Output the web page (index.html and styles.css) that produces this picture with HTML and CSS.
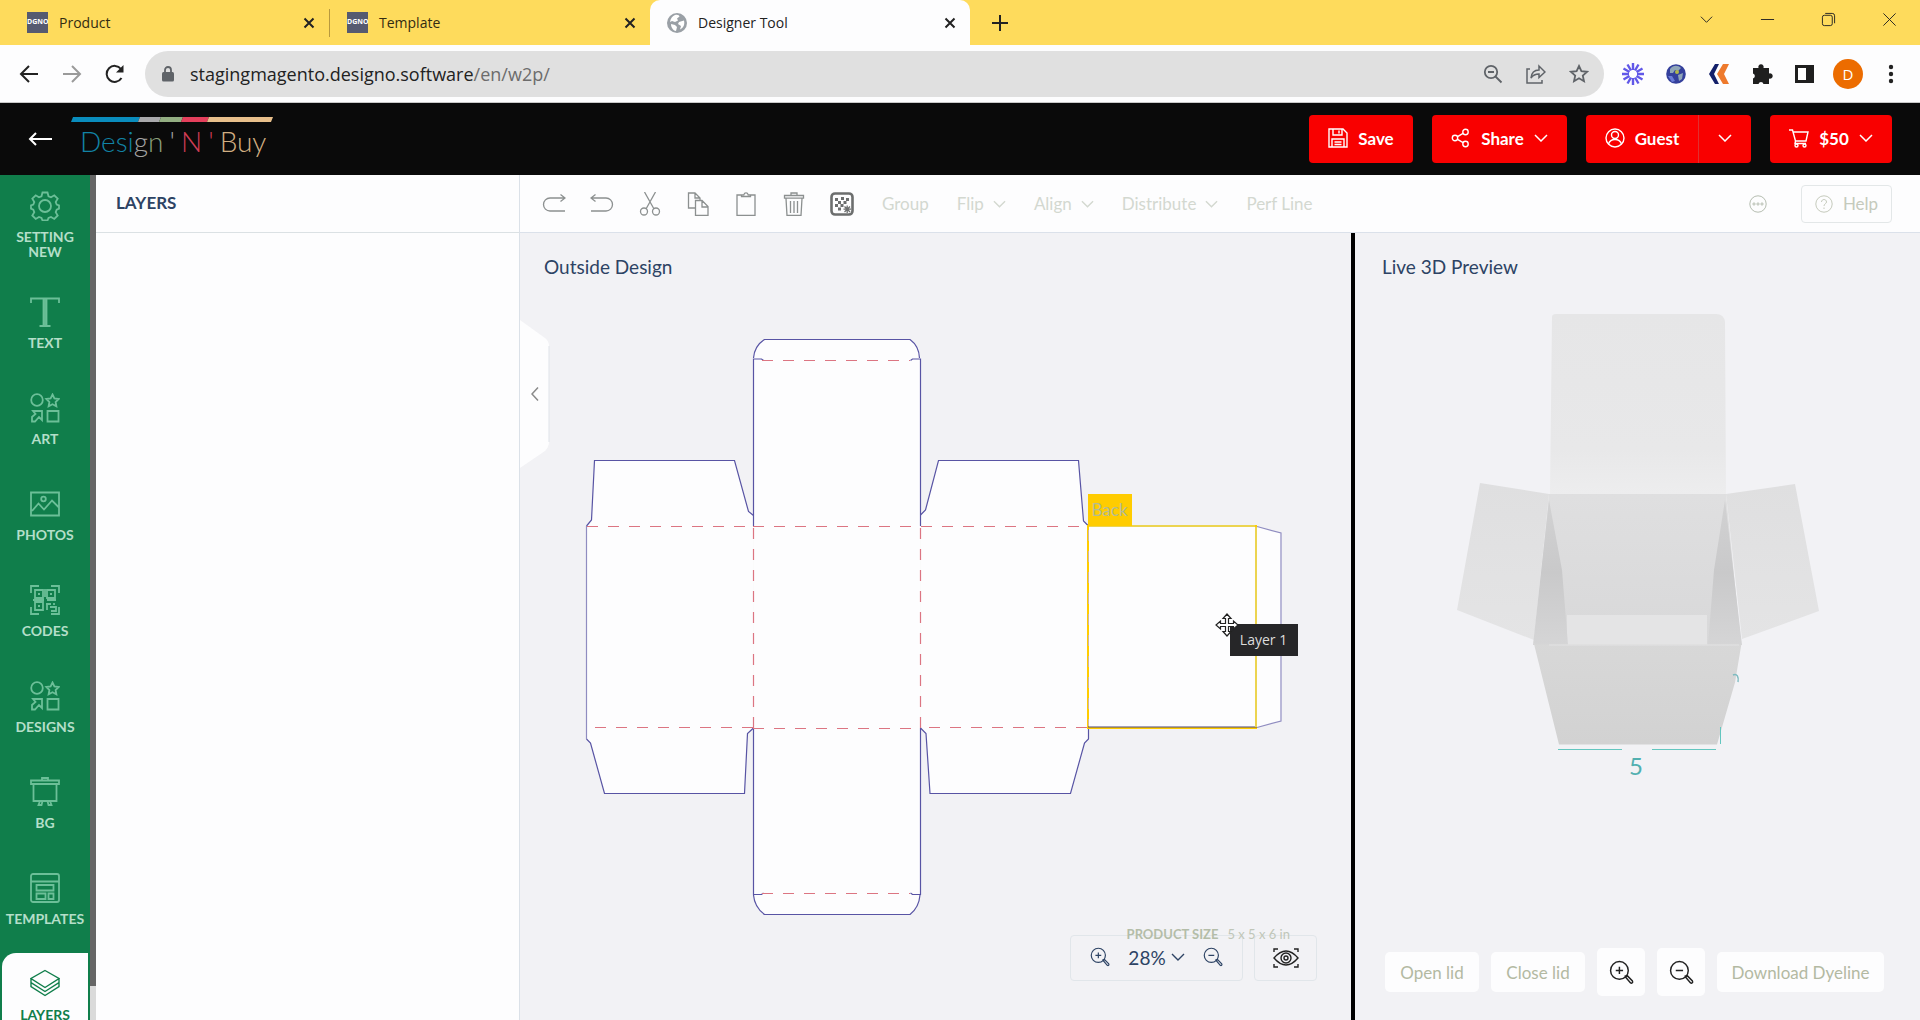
FILE: index.html
```html
<!DOCTYPE html>
<html lang="en">
<head>
<meta charset="utf-8">
<title>Designer Tool</title>
<link rel="stylesheet" href="styles.css">
</head>
<body>
<svg class="sprite" aria-hidden="true">
  <symbol id="x" viewBox="0 0 12 12"><path d="M1.500 1.500l9 9M10.500 1.500l-9 9"/></symbol>
  <symbol id="chev" viewBox="0 0 14 8"><path d="M1 1l6 6 6-6"/></symbol>
  <symbol id="art" viewBox="0 0 30 30"><circle cx="7" cy="7" r="5.800"/><path d="M22.500 1.500l1.900 3.900 4.300.6-3.100 3 .8 4.300-3.900-2-3.900 2 .8-4.300-3.100-3 4.300-.6z"/><path d="M3 18h9v9l-3-3-4 4.500H2V24l3.500-3zM17.500 18h11v10.500h-11z"/></symbol>
  <symbol id="zin" viewBox="0 0 24 24"><circle cx="10" cy="10" r="8.500"/><path d="M6.500 10h7M10 6.500v7M16 16.500l1.500-1.500 5 5.200c.8 1.400-.6 2.600-1.800 1.800zM15 15l1.800 1.200"/></symbol>
  <symbol id="zout" viewBox="0 0 24 24"><circle cx="10" cy="10" r="8.500"/><path d="M6.500 10h7M16 16.500l1.500-1.500 5 5.200c.8 1.400-.6 2.600-1.800 1.800zM15 15l1.800 1.200"/></symbol>
</svg>

<header class="browser">
  <div class="tabs">
    <div class="tab tab--sep"><span class="fav">DGNO</span><span class="tab__name">Product</span><button class="tab__close" aria-label="Close Product"><svg><use href="#x"/></svg></button></div>
    <div class="tab"><span class="fav">DGNO</span><span class="tab__name">Template</span><button class="tab__close" aria-label="Close Template"><svg><use href="#x"/></svg></button></div>
    <div class="tab tab--active">
      <svg class="globe" viewBox="0 0 20 20"><circle cx="10" cy="10" r="10" fill="#9aa0a6"/><path d="M8 2c3-.6 4 .2 4.500 1.500L10 5.500l1 2-3 1.500-3-1-2 1C3.500 5.500 5.500 3 8 2zM4 11l4 1 2 2-1 4c-3-.6-5-3.500-5-7zM12 9l5-1.500c1 4-.5 7.500-4 9l1-3.500-3-2z" fill="#fff"/></svg>
      <span class="tab__name">Designer Tool</span><button class="tab__close" aria-label="Close Designer Tool"><svg><use href="#x"/></svg></button></div>
    <button class="newtab" aria-label="New tab"><svg viewBox="0 0 16 16"><path d="M8 0v16M0 8h16"/></svg></button>
    <div class="winctl">
      <button aria-label="Search tabs"><svg viewBox="0 0 16 16"><path d="M2 5l6 6 6-6"/></svg></button>
      <button aria-label="Minimize"><svg viewBox="0 0 16 16"><path d="M1 8h14"/></svg></button>
      <button aria-label="Restore"><svg viewBox="0 0 16 16"><rect x="1.500" y="3.500" width="10.500" height="11" rx="2"/><path d="M4.500 1.500H12q2.500 0 2.500 2.500v8"/></svg></button>
      <button aria-label="Close window"><svg viewBox="0 0 16 16"><path d="M1.500 1.500l13 13M14.500 1.500l-13 13"/></svg></button>
    </div>
  </div>
  <div class="nav">
    <div class="nav__btns">
      <button aria-label="Back"><svg viewBox="0 0 20 20"><path d="M19 10H2M10 2l-8 8 8 8"/></svg></button>
      <button aria-label="Forward" class="dim"><svg viewBox="0 0 20 20"><path d="M1 10h17M10 2l8 8-8 8"/></svg></button>
      <button aria-label="Reload"><svg viewBox="0 0 20 20"><path d="M16.500 14A8 8 0 1 1 16 5"/><path d="M18.500 1v7.500H11z" fill="#222" stroke="none"/></svg></button>
    </div>
    <div class="omni">
      <svg class="lock" viewBox="0 0 12 16"><rect y="6" width="12" height="9.500" rx="1.500" fill="#5f6368"/><path d="M3 6V4a3 3 0 0 1 6 0v2" fill="none" stroke="#5f6368" stroke-width="1.800"/></svg>
      <a class="url" href="#">stagingmagento.designo.software<span>/en/w2p/</span></a>
      <button aria-label="Zoom"><svg viewBox="0 0 20 20"><circle cx="8" cy="8" r="6.200"/><path d="M5 8h6M12.500 12.500l6 6"/></svg></button>
      <button aria-label="Share page"><svg viewBox="0 0 20 20"><path d="M4 5H1v14h15v-3M5 14c.5-5 3-8 8-8V2l6 6-6 5.500V10c-3.500 0-6 1-8 4z" stroke-width="1.500"/></svg></button>
      <button aria-label="Bookmark"><svg viewBox="0 0 20 20"><path d="M10 2l2.400 5.200 5.600.6-4.200 3.800 1.200 5.600-5-2.900-5 2.900 1.200-5.600L2 7.800l5.600-.6z"/></svg></button>
    </div>
    <div class="exts">
      <button aria-label="Burst extension"><svg viewBox="-11 -11 22 22"><g stroke="#6158e8" stroke-width="2.400"><path d="M0-4v-7M0 4v7M4 0h7M-4 0h-7M2-3.500l3.500-6M-2-3.500l-3.500-6M2 3.500l3.500 6M-2 3.500l-3.500 6M3.500-2l6-3.500M3.500 2l6 3.500M-3.500-2l-6-3.500M-3.500 2l-6 3.500"/></g></svg></button>
      <button aria-label="Globe extension"><svg viewBox="-11 -11 22 22"><circle r="9.800" fill="#34409c"/><path d="M-6-5c3-4 8-4 11-1l-3 3-3-1-2 3-3 0zM2 1l5-2-1 6-3 2z" fill="#8fa6b8"/><path d="M-8 2l4 0 3 5-3 1z" fill="#6a7cd8"/><circle cx="1" cy="-2" r="2" fill="#b2b84a"/></svg></button>
      <button aria-label="Chevron extension"><svg viewBox="0 0 22 22"><path d="M7 1h4L6 11l5 10H7L1 11z" fill="#14206a"/><path d="M15 1h6l-5 10 5 10h-6L9 11z" fill="#ee7a2d"/></svg></button>
      <button aria-label="Extensions"><svg viewBox="0 0 22 22"><path d="M2 5h5.500a2.700 2.700 0 1 1 5 0H18v5.500a2.700 2.700 0 1 1 0 5V21h-5.500a2.600 2.600 0 0 0-5 0H2v-5.500a2.600 2.600 0 0 0 0-5z" fill="#1f1f1f"/></svg></button>
      <button aria-label="Side panel"><svg viewBox="0 0 22 22"><path d="M2.500 3.500h16v15h-16z" fill="#fff" stroke="#1f1f1f" stroke-width="3"/><path d="M12 3h7v16h-7z" fill="#1f1f1f"/></svg></button>
      <button class="avatar">D</button>
      <button aria-label="Menu"><svg viewBox="0 0 22 22"><circle cx="11" cy="4" r="2.200"/><circle cx="11" cy="11" r="2.200"/><circle cx="11" cy="18" r="2.200"/></svg></button>
    </div>
  </div>
</header>

<div class="appbar">
  <button class="appbar__back" aria-label="Back"><svg viewBox="0 0 24 14"><path d="M24 7H2M8 1L2 7l6 6"/></svg></button>
  <a class="logo" href="#">
    <svg class="logo__bar" viewBox="0 0 202 5"><path d="M2 0h67l-2 5H0z" fill="#0a8dbd"/><path d="M69 0h21l-2 5H67z" fill="#a9a9ab"/><path d="M90 0h22l-2 5H88z" fill="#93ae82"/><path d="M112 0h26l-2 5h-26z" fill="#e5405c"/><path d="M138 0h64l-2 5h-64z" fill="#e8bf8b"/></svg>
    <span class="logo__text"><span><span class="c1">Desi</span><span class="c2">g</span><span class="c3">n</span></span> <span class="c2">'</span> <span class="c4">N</span> <span class="c4">'</span> <span class="c5">Buy</span></span>
  </a>
  <div class="actions">
    <button class="red save"><svg viewBox="0 0 20 20"><path d="M1 1h14l4 4v14H1zM5 1v6h9V1M11 2.500v3M4 19v-8h12v8M6.500 14h7M6.500 16.500h7"/></svg>Save</button>
    <button class="red share"><svg viewBox="0 0 20 20"><circle cx="4" cy="10" r="2.700"/><circle cx="14.500" cy="4" r="2.700"/><circle cx="14.500" cy="16" r="2.700"/><path d="M6.500 8.700l5.600-3.300M6.500 11.300l5.600 3.300"/></svg>Share<svg class="chev"><use href="#chev"/></svg></button>
    <div class="split">
      <button class="red guest"><svg viewBox="0 0 20 20"><circle cx="10" cy="10" r="9"/><circle cx="10" cy="7" r="3.500"/><path d="M3.500 16c1-3 3-4.500 6.500-4.500s5.500 1.500 6.500 4.500"/></svg>Guest</button>
      <button class="red more" aria-label="Guest menu"><svg class="chev"><use href="#chev"/></svg></button>
    </div>
    <button class="red cart"><svg viewBox="0 0 20 20"><path d="M0 2h3.500l3 11h10.500l2-9H4M6.500 13l-.5 2.500h11"/><circle cx="7.500" cy="17.500" r="1.500"/><circle cx="15.500" cy="17.500" r="1.500"/></svg>$50<svg class="chev"><use href="#chev"/></svg></button>
  </div>
</div>

<div class="work">
  <nav class="side">
    <a class="item item--two" href="#"><svg viewBox="0 0 30 30"><circle cx="15" cy="15" r="6"/><path d="M12.500 1.500h5l1 3.800 2.500 1 3.300-2 3.400 3.400-2 3.300 1 2.500 2.300.8v3.400l-2.300 1-1 2.500 2 3.300-3.400 3.400-3.300-2-2.500 1-1 2.600h-5l-1-2.600-2.500-1-3.300 2-3.400-3.400 2-3.300-1-2.500-2.300-1v-3.400l2.300-.8 1-2.500-2-3.300 3.400-3.400 3.300 2 2.500-1z"/></svg><span>SETTING NEW</span></a>
    <a class="item" href="#"><svg viewBox="0 0 30 30"><path d="M1 6V1.500h28V6M13.500 2v26.500M16.500 2v26.500M9.500 29h11"/><path d="M15 2v27" /></svg><span>TEXT</span></a>
    <a class="item" href="#"><svg><use href="#art"/></svg><span>ART</span></a>
    <a class="item" href="#"><svg viewBox="0 0 30 30"><path d="M1 3.500h28v23H1zM2 22l6.500-7.500 5.500 6 8-9 7 7"/><circle cx="13.500" cy="10" r="2.300"/></svg><span>PHOTOS</span></a>
    <a class="item" href="#"><svg viewBox="0 0 30 30"><path d="M1 8V1h8M21 1h8v7M1 22v7h8M21 29h8v-7M5 5h8v8H5zM17 5h8v8h-8zM5 17h8v8H5zM8 9h2M20 9h2M8 21h2M15 4v8M3 15h11M17 15h9M16 19h5M17 19v6M20 22h6v4h-5M24 18v2"/></svg><span>CODES</span></a>
    <a class="item" href="#"><svg><use href="#art"/></svg><span>DESIGNS</span></a>
    <a class="item" href="#"><svg viewBox="0 0 30 30"><path d="M1 3.500h28v3.500H1zM3.500 7v17h23V7M12 3V1h6v2M10 24l-1.500 4h3l1-4M20 24l1.500 4h-3l-1-4"/></svg><span>BG</span></a>
    <a class="item" href="#"><svg viewBox="0 0 30 30"><rect x="1" y="1" width="28" height="28" rx="2"/><path d="M1 8.500h28M6.500 12h17v5.500h-17zM6.500 20.500h9V26h-9zM18.500 20.500h5V26h-5z"/></svg><span>TEMPLATES</span></a>
    <a class="item item--active" href="#"><svg viewBox="0 0 30 30"><path d="M15 1.500l14 8-14 9-14-9zM1 9.500v4l14 9 14-9v-4M1 14v3.500l14 9 14-9V14"/></svg><span>LAYERS</span></a>
  </nav>
  <div class="scroll"><div class="scroll__thumb"></div></div>
  <aside class="panel"><h2 class="panel__head">LAYERS</h2></aside>

  <main class="main">
    <div class="toolbar">
      <div class="tools">
        <button aria-label="Redo"><svg viewBox="0 0 24 24"><path d="M23 19H8a6.500 6.500 0 0 1 0-13h15M18.500 2.500L23 6l-4.500 3.500"/></svg></button>
        <button aria-label="Undo"><svg viewBox="0 0 24 24"><path d="M1 19h15a6.500 6.500 0 0 0 0-13H1M5.500 2.500L1 6l4.500 3.500"/></svg></button>
        <button aria-label="Cut"><svg viewBox="0 0 24 24"><path d="M6.500 0l9.500 17M17.500 0L8 17"/><circle cx="6" cy="19.500" r="3.500"/><circle cx="18" cy="19.500" r="3.500"/></svg></button>
        <button aria-label="Copy"><svg viewBox="0 0 24 24"><path d="M9 16H2.500V1H9l5 5v2M9 1v5h5M9.500 8.500H16l6 6v9H9.500zM16 8.500V15h6"/></svg></button>
        <button aria-label="Paste"><svg viewBox="0 0 24 24"><path d="M8 3H3v20.500h18V3h-5M7.500 4.500V2.800h2.300c.7-2.600 3.700-2.600 4.400 0h2.300v1.700z"/></svg></button>
        <button aria-label="Delete"><svg viewBox="0 0 24 24"><path d="M2.500 3.500h19v2.700h-19zM9 3V1h6v2M4 6.500l1 17h14l1-17M8.500 9v12M12 9v12M15.500 9v12"/></svg></button>
        <button aria-label="Transparency"><svg viewBox="0 0 24 24"><rect x="1.500" y="1.500" width="21" height="21" rx="3.500" stroke="#6c6e6e" stroke-width="2.600"/><path d="M5 6h3v3H5zM11 5h3v3h-3zM16 6h3v3h-3zM8 9h3v3H8zM13.500 9h3v3h-3zM5 12h3v3H5zM10.500 12h3v3h-3zM8 15.500h3v3H8z" fill="#6c6e6e" stroke="none"/><path d="M14.500 14.500l5.500 5.500M20 14.500L14.500 20M17.200 13.500v7.500M13.500 17.200H21" stroke="#6c6e6e"/></svg></button>
      </div>
      <div class="cmds">
        <button>Group</button>
        <button>Flip<svg class="chev"><use href="#chev"/></svg></button>
        <button>Align<svg class="chev"><use href="#chev"/></svg></button>
        <button>Distribute<svg class="chev"><use href="#chev"/></svg></button>
        <button>Perf Line</button>
      </div>
      <button class="dots" aria-label="More"><svg viewBox="0 0 18 18"><circle cx="9" cy="9" r="8.200"/><circle cx="5" cy="9" r="1.100"/><circle cx="9" cy="9" r="1.100"/><circle cx="13" cy="9" r="1.100"/></svg></button>
      <button class="help"><svg viewBox="0 0 18 18"><circle cx="9" cy="9" r="8.200"/><path d="M6.500 7c0-3.300 5-3.300 5 0 0 1.700-2.500 1.800-2.500 4M9 12.500v1.500"/></svg>Help</button>
    </div>

    <div class="views">
      <section class="canvas">
        <button class="fold" aria-label="Collapse panel"><svg class="fold__bg" viewBox="0 0 30 148"><path d="M0 0l25 18q4 3 4 8v96q0 5-4 9L0 148z" fill="#fdfdfe"/><path d="M29 26v96" stroke="#dfe3ea"/></svg><svg class="fold__ic" viewBox="0 0 8 14"><path d="M7 0.500L1 7l6 6.500"/></svg></button>
        <h3 class="title">Outside Design</h3>
        <div class="stage">
          <svg viewBox="585 335 701 583">
            <g fill="#fdfdfe" stroke="#5854a4" stroke-width="1.200">
              <path d="M586.500 526l5-6 3-59.500h140l14 51 5 4V728l-6 5.500-3 60h-140l-14-50.500-4-4z" stroke="none"/>
              <path d="M753.500 526V359.500q0-14 12-20h145q10 6 10 20V894q-1 14-11 20.500H765q-11-6-11.500-20.500z" stroke="none"/>
              <path d="M920.500 526v-11l5-5 13-49.500h140l5 60.500 5 5 .5 213-4.500 4-14 50.500H930l-4-60-5.500-6z" stroke="none"/>
              <path d="M1088 526.500h169l24.500 6.500v188l-24.500 6.500h-169z" stroke="none"/>
              <path fill="none" d="M586.500 526l5-6 3-59.500h140l14 51 5 4M586.500 739l4 4 14 50.500h140l3-60 6-5.500M920.500 515l5-5 13-49.500h140l5 60.500 5 5M920.500 728l5.500 5.500 4 60h140.500l14-50.500 4-4v-12"/>
              <path fill="none" d="M753.500 526V359h8l2 1.500M753.500 358q1-12 11-18.500h145.500q9 6.500 9.500 18.500M920.500 526V359h-8l-2 1.500M753.500 728V894.500h8l2-1.500M753.500 895q1 12 11 19.500H910q9-7 10-19.500M920.500 728V894.500h-8l-2-1.500"/>
              <path fill="none" stroke="#8f8cc0" d="M586.500 526v213M1257 526.500l24 6.500v188l-24 6.500"/>
            </g>
            <g fill="none" stroke="#dc7582" stroke-width="1.200" stroke-dasharray="11 10">
              <path d="M587 526.500h166M753 526.500h167M921 526.500h167M595 727.500h158M753 728.500h167M929 727.500h159M762 360.500h148M762 893.500h148"/>
              <path d="M753.500 528v200M920.500 528v200"/>
            </g>
            <path d="M1088 526h168v202h-168z" fill="none" stroke="#fc0" stroke-width="2"/>
            <path d="M1088 727h169" stroke="#4a4478"/>
            <path d="M1256 527v200M1089 526h166" stroke="#ecd450" stroke-width="2"/>
            <path d="M1088.500 530v196" stroke="#d0b6a0" stroke-dasharray="11 10"/>
          </svg>
          <span class="tag">Back</span>
          <span class="tip">Layer 1</span>
          <svg class="cursor" viewBox="-12 -12 24 24"><path d="M0-11l4 4.500H1.500v5H6.500V-4L11 0l-4.500 4V1.500h-5v5H4L0 11l-4-4.500h2.500v-5h-5V4L-11 0l4.500-4v2.500h5v-5H-4z" fill="#fff" stroke="#222" stroke-width="1.200"/></svg>
        </div>
        <div class="zoombar">
          <p class="size"><b>PRODUCT SIZE</b><span>5 x 5 x 6 in</span></p>
          <div class="zoombox">
            <button aria-label="Zoom in"><svg><use href="#zin"/></svg></button>
            <button class="pct">28%<svg class="chev"><use href="#chev"/></svg></button>
            <button aria-label="Zoom out"><svg><use href="#zout"/></svg></button>
          </div>
          <button class="eye" aria-label="Preview"><svg viewBox="0 0 26 20"><path d="M1 10Q13-4 25 10 13 24 1 10zM1 4V1h4M21 1h4v3M1 16v3h4M21 19h4v-3"/><circle cx="13" cy="10" r="5"/><circle cx="13" cy="10" r="2"/></svg></button>
        </div>
      </section>

      <section class="preview">
        <h3 class="title">Live 3D Preview</h3>
        <svg class="box3d" viewBox="1455 311 366 470">
          <defs>
            <linearGradient id="g1" x1="0" y1="0" x2="0" y2="1"><stop offset="0" stop-color="#e6e6e7"/><stop offset=".75" stop-color="#e8e8e9"/><stop offset="1" stop-color="#ededee"/></linearGradient>
            <linearGradient id="g2" x1="0" y1="0" x2="0" y2="1"><stop offset="0" stop-color="#dfdfe0"/><stop offset="1" stop-color="#d8d8d9"/></linearGradient>
            <linearGradient id="g3" x1="0" y1="0" x2="0" y2="1"><stop offset="0" stop-color="#d8d8d8"/><stop offset="1" stop-color="#d2d2d2"/></linearGradient>
            <linearGradient id="g4" x1="0" y1="0" x2="0" y2="1"><stop offset="0" stop-color="#d2d2d3"/><stop offset=".5" stop-color="#c9c9ca"/><stop offset="1" stop-color="#d5d5d6"/></linearGradient>
            <linearGradient id="g5" x1="0" y1="0" x2="0" y2="1"><stop offset="0" stop-color="#dfdfe0"/><stop offset="1" stop-color="#e4e4e5"/></linearGradient>
          </defs>
          <path d="M1552 317q0-3 4-3h160q8 0 9 8l1 172h-176z" fill="url(#g1)"/>
          <path d="M1480 483l69 11-15 146-77-30zM1795 484l-69 10 16 145 77-28z" fill="url(#g5)"/>
          <path d="M1549 494h177l15 151h-207z" fill="url(#g2)"/>
          <path d="M1567 615h140v30h-140z" fill="#e4e4e5"/>
          <path d="M1549 500l13 70 6 75h-35zM1725 500l-11 70-6 75h34z" fill="url(#g4)"/>
          <path d="M1533 640l2 4.500h206l1-4-7 42-18 62h-158z" fill="url(#g3)"/>
          <path d="M1549 645h190" stroke="#e2e2e3"/>
          <path d="M1558 749.500h64M1652 749.500h64M1720.500 744v-17" stroke="#63c6bf" fill="none"/>
          <path d="M1733 675c4-2 6 2 5 7" stroke="#7dbbc0" stroke-width="1.500" fill="none"/>
          <text x="1636" y="775" text-anchor="middle">5</text>
        </svg>
        <div class="pbtns">
          <button>Open lid</button>
          <button>Close lid</button>
          <button class="sq" aria-label="Zoom in preview"><svg><use href="#zin"/></svg></button>
          <button class="sq" aria-label="Zoom out preview"><svg><use href="#zout"/></svg></button>
          <button class="dl">Download Dyeline</button>
        </div>
      </section>
    </div>
  </main>
</div>
</body>
</html>
```
FILE: styles.css
```css
* { box-sizing: border-box; }
body {
  margin: 0;
  height: 100vh;
  overflow: hidden;
  display: flex;
  flex-direction: column;
  background: #fdfdfe;
  color: #2d4364;
  font-family: Lato, "Open Sans", sans-serif;
  font-size: 17px;
}
button {
  border: 0;
  padding: 0;
  margin: 0;
  background: none;
  color: inherit;
  font: inherit;
  display: flex;
  align-items: center;
  justify-content: center;
}
a { color: inherit; text-decoration: none; }
h2, h3, p { margin: 0; font-weight: inherit; }
svg { display: block; flex: none; }
button svg, .item svg { fill: none; stroke: currentColor; }
.sprite { position: absolute; width: 0; height: 0; }
.chev { width: 14px; height: 8px; stroke-width: 1.5; }

/* browser frame */
.browser { flex: none; font-family: "Open Sans", sans-serif; }
.tabs { display: flex; height: 45px; padding-left: 10px; background: #fedb5c; color: #332b12; }
.tab { display: flex; align-items: center; width: 320px; padding: 0 14px 0 17px; position: relative; }
.tab--sep { border-right: 1px solid #c9a53a; border-image: linear-gradient(transparent 22%, #b8993e 22% 80%, transparent 80%) 1; }
.tab--active { background: #fdfdfe; border-radius: 10px 10px 0 0; color: #222; }
.tab__name { flex: 1; margin-left: 11px; font-size: 14px; }
.tab__close svg { width: 12px; height: 12px; stroke: #222; stroke-width: 2; }
.fav { width: 21px; height: 21px; background: #565a70; color: #fff; font-size: 7px; font-weight: 700; line-height: 20px; text-align: center; }
.globe { width: 20px; height: 20px; }
.newtab { margin-left: 22px; }
.newtab svg { width: 16px; height: 16px; stroke: #222; stroke-width: 2; }
.winctl { display: flex; gap: 46px; margin-left: auto; padding: 0 23px 6px 0; }
.winctl svg { width: 15px; height: 15px; stroke: #222; }
.nav { display: flex; align-items: center; height: 58px; padding: 6px 18px 6px 19px; border-bottom: 1px solid #c9c9c9; }
.nav__btns { display: flex; gap: 23px; width: 126px; color: #222; }
.nav__btns svg { width: 20px; height: 20px; stroke-width: 2; }
.nav__btns .dim { color: #9a9a9a; }
.omni { flex: 1; display: flex; align-items: center; gap: 23px; height: 46px; padding: 0 15px 0 17px; border-radius: 23px; background: #e0e0e0; color: #5f6368; }
.omni button svg { width: 20px; height: 20px; stroke-width: 1.8; }
.lock { width: 12px; height: 16px; }
.url { flex: 1; margin-left: -7px; font-size: 18px; color: #222; }
.url span { color: #6c6c6c; }
.exts { display: flex; align-items: center; gap: 21px; margin-left: 18px; }
.exts svg { width: 22px; height: 22px; stroke: none; fill: #222; }
.avatar { width: 30px; height: 30px; margin: 0 -4px; border-radius: 50%; background: #ec6c00; color: #fff; font-size: 15px; }

/* application bar */
.appbar { flex: none; display: flex; align-items: center; height: 72px; padding: 0 28px; background: #0a0a0a; color: #fff; }
.appbar__back svg { width: 24px; height: 14px; stroke-width: 2; }
.logo { margin-left: 19px; height: 44px; }
.logo__bar { width: 202px; height: 5px; }
.logo__text { display: flex; gap: 6px; margin-left: 9px; font-size: 28px; font-weight: 300; line-height: 38px; white-space: nowrap; }
.c1 { color: #1283a5; }
.c2 { color: #a4a4a4; }
.c3 { color: #8ba07c; }
.c4 { color: #cf3c55; }
.c5 { color: #d2af82; }
.actions { display: flex; gap: 19px; margin-left: auto; }
.red { height: 48px; gap: 10px; padding-bottom: 2px; border-radius: 4px; background: #f90000; color: #fff; font-weight: 700; }
.red svg { width: 20px; height: 20px; stroke-width: 1.4; }
.red .chev { width: 14px; height: 8px; stroke-width: 1.5; }
.save { width: 104px; }
.share { width: 135px; }
.split { display: flex; }
.guest { width: 112px; border-radius: 4px 0 0 4px; }
.more { width: 53px; border-left: 1px solid #e03030; border-radius: 0 4px 4px 0; }
.cart { width: 122px; }

/* work area */
.work { flex: 1; min-height: 0; display: flex; }
.side { flex: none; width: 90px; overflow: hidden; background: #107e4b; }
.item { display: flex; flex-direction: column; align-items: center; gap: 8px; min-height: 96px; padding-top: 16px; color: #6cbf98; }
.item--two { min-height: 106px; }
.item svg { width: 30px; height: 30px; stroke-width: 1.8; }
.item span { max-width: 80px; color: #b4dfc9; font-size: 14px; font-weight: 700; line-height: 15px; text-align: center; }
.item--active { margin: 0 2px; border-radius: 14px 0 0; background: #fdfdfe; color: #107e4b; }
.item--active svg { stroke-width: 1.4; }
.item--active span { color: #107e4b; }
.scroll { flex: none; width: 6px; background: #dadada; }
.scroll__thumb { height: 96%; background: #666; }
.panel { flex: none; width: 424px; border-right: 1px solid #dbe1e8; }
.panel__head { height: 58px; padding-left: 20px; border-bottom: 1px solid #dbe1e4; font-size: 17px; font-weight: 700; line-height: 56px; }
.main { flex: 1; min-width: 0; display: flex; flex-direction: column; }
.toolbar { flex: none; display: flex; align-items: center; height: 58px; padding: 0 28px 0 22px; border-bottom: 1px solid #dbe1ea; color: #d3d8d0; }
.tools { display: flex; gap: 24px; color: #8c9090; }
.tools svg { width: 24px; height: 24px; stroke-width: 1.3; }
.cmds { display: flex; gap: 28px; margin-left: 28px; }
.cmds button { gap: 9px; }
.cmds .chev { width: 13px; }
.dots { margin-left: auto; color: #b5bdb0; }
.dots svg, .help svg { width: 18px; height: 18px; }
.help { width: 91px; height: 38px; margin-left: 34px; gap: 10px; border: 1px solid #e3e7e8; border-radius: 4px; color: #c5cabc; }
.views { flex: 1; min-height: 0; display: grid; grid-template-columns: 831fr 569fr; background: #f2f2f5; }
.title { font-size: 19px; line-height: 24px; }
.canvas { position: relative; display: flex; flex-direction: column; padding: 22px 34px 39px 24px; }
.fold { position: absolute; left: 0; top: 87px; width: 30px; height: 148px; color: #8a8a8a; }
.fold__bg { position: absolute; inset: 0; width: 30px; height: 148px; }
.fold__bg path { stroke-width: 1; }
.fold__bg path:first-child { stroke: none; }
.fold__ic { position: relative; width: 8px; height: 14px; stroke-width: 1.5; }
.stage { position: relative; align-self: center; width: 701px; margin: 56px -34px 0 -25px; }
.stage > svg:first-child { width: 701px; height: 583px; }
.tag { position: absolute; left: 503px; top: 159px; width: 44px; height: 32px; background: #fc0; color: #b3bb93; line-height: 32px; text-align: center; }
.tip { position: absolute; left: 645px; top: 289px; width: 68px; height: 32px; background: #262628; color: #dcdcdc; font: 14px/31px "Open Sans", sans-serif; text-align: center; }
.cursor { position: absolute; left: 630px; top: 278px; width: 24px; height: 24px; }
.zoombar { position: relative; display: flex; justify-content: flex-end; gap: 11px; margin-top: auto; }
.zoombox { display: flex; align-items: center; justify-content: space-between; width: 173px; height: 46px; padding: 0 19px 2px; border: 1px solid #e1e6ea; border-radius: 4px; }
.zoombox svg { width: 20px; height: 20px; stroke-width: 1.4; }
.pct { gap: 5px; font-size: 19px; }
.pct .chev { width: 14px; height: 8px; }
.eye { width: 63px; height: 46px; border: 1px solid #e1e6ea; border-radius: 4px; color: #222; }
.eye svg { width: 26px; height: 20px; stroke-width: 1.4; }
.size { position: absolute; right: 27px; top: -9px; display: flex; gap: 9px; color: #b4bda8; font-size: 13px; line-height: 16px; white-space: nowrap; }
.size span { color: #c0c6b8; }
.preview { display: flex; flex-direction: column; padding: 22px 27px 24px; border-left: 4px solid #000; }
.box3d { align-self: center; width: 366px; height: 470px; margin-top: 32px; }
.box3d text { font-family: Lato, sans-serif; font-size: 24px; fill: #52b0b0; }
.pbtns { display: flex; align-items: center; gap: 12px; margin: auto 0 0 3px; color: #b3b9a2; }
.pbtns button { width: 94px; height: 40px; border-radius: 5px; background: #fdfdfe; }
.pbtns .sq { width: 48px; height: 48px; color: #222; }
.pbtns .dl { width: 167px; }
.sq svg { width: 25px; height: 25px; stroke-width: 1.4; }
```
